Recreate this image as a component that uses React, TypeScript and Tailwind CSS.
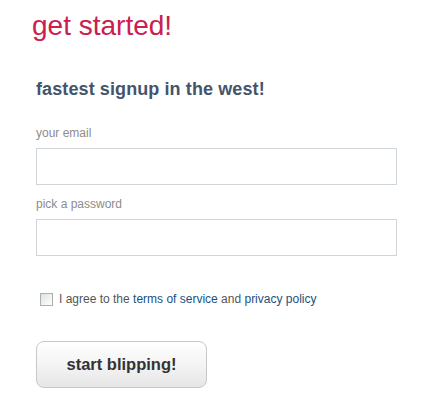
import React, { useState } from 'react';

const App = () => {
  const [agree, setAgree] = useState(false);

  return (
    <div className="min-h-[403px] w-[447px] bg-white font-['Liberation_Sans',Arial,sans-serif]">
      <div className="pl-[32px] pt-[9px]">
        <h1 className="text-[28px] leading-[33px] text-[#c9204f]">get started!</h1>
      </div>

      <form className="flex w-[397px] flex-col pl-[36px] pt-[36px]" onSubmit={(e) => e.preventDefault()}>
        <h2 className="text-[18px] font-bold leading-[22px] tracking-[0.1px] text-[#44546a]">fastest signup in the west!</h2>

        <label htmlFor="email" className="mt-[26px] text-[12px] leading-[14px] text-[#8c8c8c]">
          your email
        </label>
        <input
          id="email"
          type="email"
          className="mt-[8px] h-[37px] w-[361px] border border-[#cfd5d8] bg-white px-2 outline-none"
        />

        <label htmlFor="password" className="mt-[12px] text-[12px] leading-[14px] text-[#8c8c8c]">
          pick a password
        </label>
        <input
          id="password"
          type="password"
          className="mt-[8px] h-[37px] w-[361px] border border-[#cfd5d8] bg-white px-2 outline-none"
        />

        <div className="mt-[36px] flex items-center pl-[4px]">
          <input
            id="agree"
            type="checkbox"
            checked={agree}
            onChange={(e) => setAgree(e.target.checked)}
            className="h-[13px] w-[13px] appearance-none border border-[#a9b3a9] bg-gradient-to-br from-[#dfe3df] to-white"
          />
          <label htmlFor="agree" className="ml-[6px] text-[12px] leading-[14px] text-[#555]">
            I agree to the <a href="#" className="text-[#1b4f82]">terms of service</a> and{' '}
            <a href="#" className="text-[#1b4f82]">privacy policy</a>
          </label>
        </div>

        <button
          type="submit"
          className="mt-[35px] h-[47px] w-[171px] rounded-[8px] border border-[#c8c8c8] bg-gradient-to-b from-white via-[#f4f4f4] to-[#e6e6e6] text-[16.5px] font-bold text-[#333]"
        >
          start blipping!
        </button>
      </form>
    </div>
  );
};

export default App;
